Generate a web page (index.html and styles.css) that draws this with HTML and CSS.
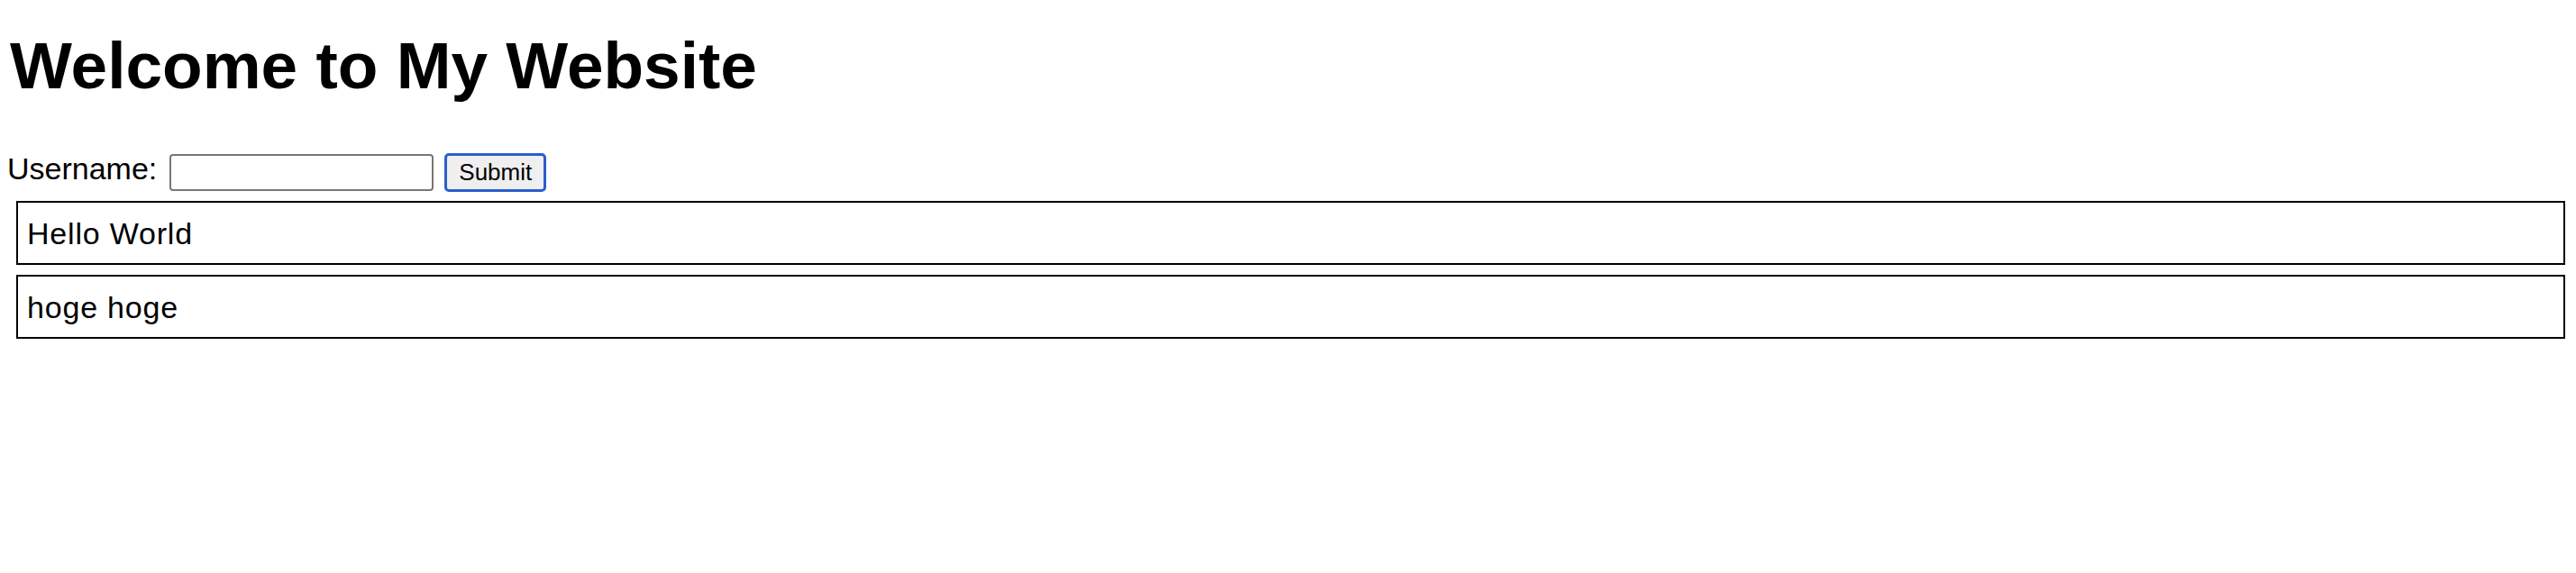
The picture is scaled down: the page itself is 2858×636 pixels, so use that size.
FILE: index.html
```html
<!DOCTYPE html>
<html lang="en">
<head>
<meta charset="utf-8">
<title>Welcome to My Website</title>
<link rel="stylesheet" href="styles.css">
</head>
<body>
<h1 class="title">Welcome to My Website</h1>
<form class="form-row" onsubmit="return false;">
  <label class="label" for="username">Username:</label>
  <input class="text-input" id="username" type="text">
  <button class="submit-btn" type="submit">Submit</button>
</form>
<div class="box">Hello World</div>
<div class="box">hoge hoge</div>
</body>
</html>
```
FILE: styles.css
```css
html, body {
  background: #ffffff;
}
body {
  margin: 0;
  padding: 0 12px 0 8px;
  font-family: "Liberation Sans", Arial, sans-serif;
  color: #000000;
}
.title {
  margin: 31px 0 52px 3px;
  font-size: 73px;
  line-height: 84px;
  font-weight: bold;
}
.form-row {
  display: flex;
  align-items: flex-start;
  margin: 0;
}
.label {
  font-size: 34px;
  line-height: 40px;
}
.text-input {
  box-sizing: border-box;
  margin: 4px 0 0 14px;
  width: 293px;
  height: 41px;
  border: 2px solid #767676;
  border-radius: 4px;
  background: #ffffff;
  padding: 0 4px;
  font-size: 26px;
  font-family: "Liberation Sans", Arial, sans-serif;
}
.submit-btn {
  box-sizing: border-box;
  margin: 3px 0 0 12px;
  width: 113px;
  height: 43px;
  border: 3px solid #2a5fcc;
  border-radius: 5px;
  background: #efefef;
  padding: 0;
  font-size: 26px;
  font-family: "Liberation Sans", Arial, sans-serif;
  color: #000000;
}
.box {
  margin: 10px 0 0 10px;
  border: 2px solid #000000;
  padding: 14px 10px 13px;
  font-size: 34px;
  line-height: 40px;
  letter-spacing: 0.8px;
}
.box + .box {
  margin-top: 11px;
}
```
